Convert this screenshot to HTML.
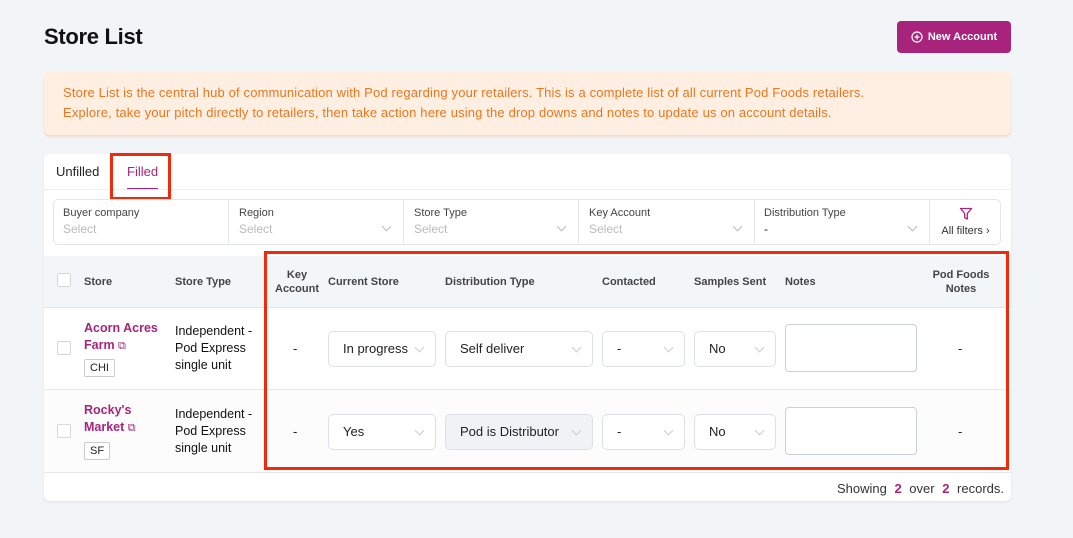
<!DOCTYPE html>
<html><head><meta charset="utf-8"><style>
*{box-sizing:border-box;margin:0;padding:0}
body{width:1073px;height:538px;background:#f2f5f7;font-family:"Liberation Sans",sans-serif;color:#222;position:relative;overflow:hidden;font-size:13px}
.a{position:absolute}
h1{position:absolute;left:44px;top:24px;font-size:22px;font-weight:bold;color:#111;letter-spacing:-0.3px}
.btn{left:897px;top:21px;width:114px;height:32px;background:#a8237c;border-radius:4px;color:#fff;font-size:11px;font-weight:bold;display:flex;align-items:center;justify-content:center;gap:5px}
.note{left:44px;top:71px;width:967px;height:64px;background:#feefe2;border-radius:6px;box-shadow:0 2px 2px #eddccf;color:#ea7720;font-size:13px;letter-spacing:0.15px;line-height:19.5px;padding:12px 19px}
.card{left:44px;top:154px;width:967px;height:347px;background:#fff;border-radius:6px;box-shadow:0 1px 2px #dde2e6}
.tab{top:164px;font-size:13px}
.filt{left:53px;top:199px;width:948px;height:46px;border:1px solid #e4e7ea;border-radius:5px}
.fs{top:199px;height:46px;border-left:1px solid #e4e7ea}
.fl{font-size:11px;color:#444}
.fv{font-size:12px;color:#bbb}
.chev{width:7px;height:7px;border-right:1px solid #bbb;border-bottom:1px solid #bbb;transform:rotate(45deg)}
.th{top:256px;left:44px;width:967px;height:52px;background:#f3f6f9;border-bottom:1px solid #e4e7ea}
.hd{font-size:11px;font-weight:bold;color:#444;text-align:center;line-height:14px}
.cb{width:14px;height:14px;border:1px solid #d5d9dd;border-radius:2px;background:#fff}
.row{left:44px;width:967px;border-bottom:1px solid #e6e9ec}
.sel{height:36px;border:1px solid #dde1e5;border-radius:5px;background:#fff;font-size:13px;padding-left:14px;line-height:34px}
.sel .chev{position:absolute;right:12px;top:12px;border-color:#ccc}
.ta{width:132px;height:48px;border:1px solid #ccd1d6;border-radius:4px;background:#fff}
.link{color:#a8237c;font-weight:bold;font-size:12.5px;line-height:17px}
.tag{border:1px solid #ccc;border-radius:2px;font-size:11px;padding:2px 5px;background:#fff}
.st{font-size:12.5px;line-height:17px;color:#111}
.red{border:3px solid #f22a0c}
</style></head><body>
<h1>Store List</h1>
<div class="a btn"><svg width="12" height="12" viewBox="0 0 12 12"><circle cx="6" cy="6" r="5" fill="none" stroke="#fff" stroke-width="1.2"/><path d="M6 3.5v5M3.5 6h5" stroke="#fff" stroke-width="1.2"/></svg>New Account</div>
<div class="a note">Store List is the central hub of communication with Pod regarding your retailers. This is a complete list of all current Pod Foods retailers.<br>Explore, take your pitch directly to retailers, then take action here using the drop downs and notes to update us on account details.</div>
<div class="a card"></div>
<div class="a tab" style="left:56px;color:#222">Unfilled</div>
<div class="a tab" style="left:127px;color:#a8237c">Filled</div>
<div class="a" style="left:127px;top:188px;width:31px;height:1px;background:#a8237c"></div>
<div class="a" style="left:44px;top:189px;width:967px;height:1px;background:#eceef0"></div>
<div class="a red" style="left:110px;top:153px;width:61px;height:47px"></div>
<div class="a filt"></div>
<div class="a" style="left:63px;top:207px"><div class="fl">Buyer company</div><div class="fv" style="margin-top:3px">Select</div></div>
<div class="a fs" style="left:228px;width:175px;padding:8px 10px"><div class="fl">Region</div><div class="fv" style="margin-top:3px">Select</div><div class="a chev" style="right:13px;top:24px"></div></div>
<div class="a fs" style="left:403px;width:175px;padding:8px 10px"><div class="fl">Store Type</div><div class="fv" style="margin-top:3px">Select</div><div class="a chev" style="right:13px;top:24px"></div></div>
<div class="a fs" style="left:578px;width:176px;padding:8px 10px"><div class="fl">Key Account</div><div class="fv" style="margin-top:3px">Select</div><div class="a chev" style="right:13px;top:24px"></div></div>
<div class="a fs" style="left:754px;width:175px;padding:8px 9px"><div class="fl">Distribution Type</div><div style="margin-top:3px;font-size:12px">-</div><div class="a chev" style="right:13px;top:24px"></div></div>
<div class="a fs" style="left:929px;width:72px;text-align:center;padding-top:8px"><svg width="14" height="14" viewBox="0 0 14 14"><path d="M1.5 1.5h11l-4.2 5v5.5l-2.6-1.3V6.5z" fill="none" stroke="#a8237c" stroke-width="1.3" stroke-linejoin="round"/></svg><div style="font-size:11px;color:#333;margin-top:1px">All filters ›</div></div>
<div class="a th"></div>
<div class="a cb" style="left:57px;top:273px"></div>
<div class="a hd" style="left:84px;top:275px">Store</div>
<div class="a hd" style="left:175px;top:275px">Store Type</div>
<div class="a hd" style="left:272px;top:268px;width:50px">Key<br>Account</div>
<div class="a hd" style="left:328px;top:275px">Current Store</div>
<div class="a hd" style="left:445px;top:275px">Distribution Type</div>
<div class="a hd" style="left:602px;top:275px">Contacted</div>
<div class="a hd" style="left:694px;top:275px">Samples Sent</div>
<div class="a hd" style="left:785px;top:275px">Notes</div>
<div class="a hd" style="left:926px;top:268px;width:70px">Pod Foods<br>Notes</div>
<div class="a row" style="top:308px;height:82px"></div>
<div class="a row" style="top:390px;height:83px;background:#fcfcfc"></div>
<div class="a cb" style="left:57px;top:341px"></div>
<div class="a link" style="left:84px;top:320px">Acorn Acres<br>Farm <span style="font-weight:normal;font-size:11px">⧉</span></div>
<div class="a tag" style="left:84px;top:359px">CHI</div>
<div class="a st" style="left:175px;top:323px">Independent -<br>Pod Express<br>single unit</div>
<div class="a" style="left:293px;top:341px">-</div>
<div class="a sel" style="left:328px;top:331px;width:108px">In progress<div class="chev"></div></div>
<div class="a sel" style="left:445px;top:331px;width:148px">Self deliver<div class="chev"></div></div>
<div class="a sel" style="left:602px;top:331px;width:83px">-<div class="chev"></div></div>
<div class="a sel" style="left:694px;top:331px;width:82px">No<div class="chev"></div></div>
<div class="a ta" style="left:785px;top:324px"></div>
<div class="a" style="left:958px;top:341px">-</div>
<div class="a cb" style="left:57px;top:424px"></div>
<div class="a link" style="left:84px;top:402px">Rocky's<br>Market <span style="font-weight:normal;font-size:11px">⧉</span></div>
<div class="a tag" style="left:84px;top:442px">SF</div>
<div class="a st" style="left:175px;top:406px">Independent -<br>Pod Express<br>single unit</div>
<div class="a" style="left:293px;top:424px">-</div>
<div class="a sel" style="left:328px;top:414px;width:108px">Yes<div class="chev"></div></div>
<div class="a sel" style="left:445px;top:414px;width:148px;background:#f0f3f5">Pod is Distributor<div class="chev"></div></div>
<div class="a sel" style="left:602px;top:414px;width:83px">-<div class="chev"></div></div>
<div class="a sel" style="left:694px;top:414px;width:82px">No<div class="chev"></div></div>
<div class="a ta" style="left:785px;top:407px"></div>
<div class="a" style="left:958px;top:424px">-</div>
<div class="a red" style="left:264px;top:251px;width:745px;height:219px"></div>
<div class="a" style="right:69px;top:481px;font-size:13px;color:#333">Showing <b style="color:#a8237c;margin:0 4px">2</b> over <b style="color:#a8237c;margin:0 4px">2</b> records.</div>
</body></html>
